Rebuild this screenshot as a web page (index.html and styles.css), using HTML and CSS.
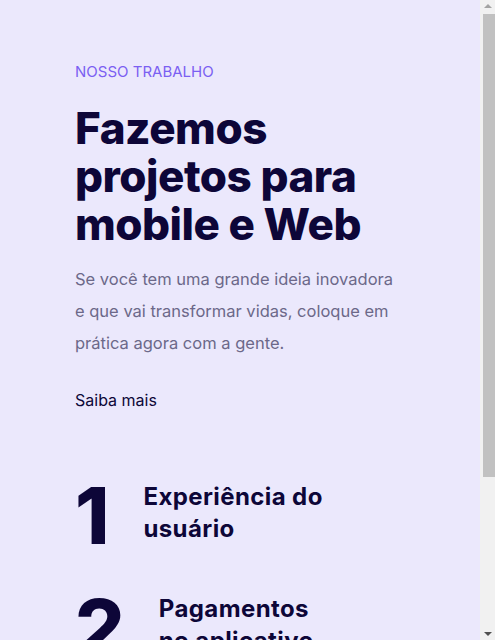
FILE: index.html
```html
<!DOCTYPE html>
<html lang="pt-BR">
<head>
<meta charset="utf-8">
<title>Nosso trabalho</title>
<link rel="stylesheet" href="styles.css">
</head>
<body>
<section class="work">
  <p class="eyebrow">NOSSO TRABALHO</p>
  <h1 class="title">Fazemos projetos para mobile e Web</h1>
  <p class="lead">Se você tem uma grande ideia inovadora e que vai transformar vidas, coloque em prática agora com a gente.</p>
  <a class="more" href="#">Saiba mais</a>
  <ol class="steps">
    <li class="step"><span class="num">1</span><span class="label">Experiência do usuário</span></li>
    <li class="step"><span class="num">2</span><span class="label">Pagamentos no aplicativo</span></li>
  </ol>
</section>
<div class="scrollbar" aria-hidden="true">
  <span class="arrow arrow-up"></span>
  <span class="thumb"></span>
  <span class="arrow arrow-down"></span>
</div>
</body>
</html>
```
FILE: styles.css
```css
html, body {
  margin: 0;
  background: #ebe8fc;
}
body {
  font-family: "Inter", "Liberation Sans", sans-serif;
  color: #0d0738;
}
.work {
  padding: 62px 75px 60px 75px;
  width: 330px;
}
.eyebrow {
  margin: 0;
  font-size: 15px;
  line-height: 20px;
  color: #7b5ff2;
}
.title {
  margin: 22px 0 0 0;
  font-size: 44px;
  line-height: 48px;
  font-weight: 800;
  letter-spacing: -0.5px;
  color: #0d0638;
  width: 300px;
}
.lead {
  margin: 15px 0 0 0;
  font-size: 16.5px;
  line-height: 32px;
  color: #6c6889;
}
.more {
  display: block;
  margin-top: 30px;
  font-size: 16px;
  line-height: 22px;
  color: #0d0738;
  text-decoration: none;
}
.steps {
  list-style: none;
  margin: 70px 0 0 0;
  padding: 0;
  display: flex;
  flex-direction: column;
  gap: 42px;
}
.step {
  display: flex;
  align-items: flex-start;
  gap: 34px;
}
.num {
  font-size: 78px;
  line-height: 70px;
  font-weight: 800;
  color: #0d0638;
}
.label {
  font-size: 24px;
  line-height: 32px;
  font-weight: 700;
  letter-spacing: 0.4px;
  width: 186px;
  color: #0d0638;
}
.scrollbar {
  position: fixed;
  top: 0;
  right: 0;
  width: 15px;
  height: 100vh;
  background: #f1f1f1;
  display: flex;
  flex-direction: column;
  align-items: center;
}
.arrow {
  width: 0;
  height: 0;
  border-left: 4px solid transparent;
  border-right: 4px solid transparent;
}
.arrow-up {
  margin-top: 4px;
  border-bottom: 4px solid #a3a3a3;
}
.arrow-down {
  margin-top: auto;
  margin-bottom: 4px;
  border-top: 4px solid #505050;
}
.thumb {
  margin-top: 6px;
  margin-left: 3px;
  width: 12px;
  height: 463px;
  background: #c1c1c1;
}
```
